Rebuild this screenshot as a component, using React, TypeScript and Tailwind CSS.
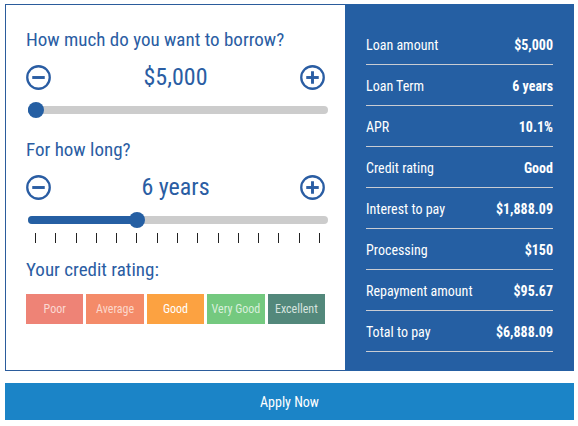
const BLUE = 'text-[#2a5da3]';

function MinusIcon() {
  return (
    <svg width="25" height="25" viewBox="0 0 24 24" fill="none">
      <circle cx="12" cy="12" r="10.8" stroke="#2a5da3" strokeWidth="2.2" />
      <rect x="6" y="10.6" width="12" height="2.8" fill="#2a5da3" />
    </svg>
  );
}

function PlusIcon() {
  return (
    <svg width="25" height="25" viewBox="0 0 24 24" fill="none">
      <circle cx="12" cy="12" r="10.8" stroke="#2a5da3" strokeWidth="2.2" />
      <rect x="6" y="10.6" width="12" height="2.8" fill="#2a5da3" />
      <rect x="10.6" y="6" width="2.8" height="12" fill="#2a5da3" />
    </svg>
  );
}

type SliderProps = { percent: number };

function Slider({ percent }: SliderProps) {
  return (
    <div className="relative h-4">
      <div className="absolute left-0 right-0 top-1 h-2 rounded-full bg-[#cccccc]" />
      <div
        className="absolute left-0 top-1 h-2 rounded-full bg-[#255fa3]"
        style={{ width: `calc(8px + (100% - 16px) * ${percent})` }}
      />
      <div
        className="absolute top-0 h-4 w-4 rounded-full bg-[#255fa3]"
        style={{ left: `calc((100% - 16px) * ${percent})` }}
      />
    </div>
  );
}

function Stepper({ value }: { value: string }) {
  return (
    <div className="flex h-[28px] items-center justify-between pr-[3px]">
      <MinusIcon />
      <span className={`text-[24px] leading-[28px] ${BLUE}`}>{value}</span>
      <PlusIcon />
    </div>
  );
}

const ratings = [
  { label: 'Poor', cls: 'bg-[#ee8376] text-[#fbd9d3]' },
  { label: 'Average', cls: 'bg-[#f48b69] text-[#fcd8cb]' },
  { label: 'Good', cls: 'bg-[#fca241] text-white' },
  { label: 'Very Good', cls: 'bg-[#74c97f] text-[#d9f0dc]' },
  { label: 'Excellent', cls: 'bg-[#53887b] text-[#d6e3df]' },
];

const summary = [
  ['Loan amount', '$5,000'],
  ['Loan Term', '6 years'],
  ['APR', '10.1%'],
  ['Credit rating', 'Good'],
  ['Interest to pay', '$1,888.09'],
  ['Processing', '$150'],
  ['Repayment amount', '$95.67'],
  ['Total to pay', '$6,888.09'],
];

export default function App() {
  return (
    <div
      className="pl-[5px] pt-[4px] w-[574px] font-stretch-condensed"
      style={{ fontFamily: '"Roboto Condensed", "Liberation Sans Narrow", Roboto, sans-serif' }}
    >
      <div className="flex h-[367px]">
        <div className="w-[340px] border-y border-l border-[#2b5c9c] pl-[20px] pr-[17px] pt-[23px]">
          <h2 className={`text-[19px] leading-[24px] ${BLUE}`}>How much do you want to borrow?</h2>
          <div className="mt-[11px]">
            <Stepper value="$5,000" />
          </div>
          <div className="mt-[11px] pl-[2px]">
            <Slider percent={0} />
          </div>
          <h2 className={`mt-[20px] text-[19px] leading-[24px] ${BLUE}`}>For how long?</h2>
          <div className="mt-[11px]">
            <Stepper value="6 years" />
          </div>
          <div className="mt-[11px] pl-[2px]">
            <Slider percent={5 / 14} />
          </div>
          <div className="mt-[5px] flex justify-between pl-[9px] pr-[8px]">
            {Array.from({ length: 15 }).map((_, i) => (
              <div key={i} className="h-[10px] w-px bg-[#222]" />
            ))}
          </div>
          <h2 className={`mt-[15px] text-[19px] leading-[24px] ${BLUE}`}>Your credit rating:</h2>
          <div className="mt-[12px] mr-[3px] flex gap-[3px]">
            {ratings.map((r) => (
              <div
                key={r.label}
                className={`flex h-[30px] flex-1 items-center justify-center text-[12px] ${r.cls}`}
              >
                {r.label}
              </div>
            ))}
          </div>
        </div>
        <div className="flex-1 bg-[#255fa3] px-[21px] pt-[20px]">
          {summary.map(([label, value]) => (
            <div
              key={label}
              className="flex h-[41px] items-center justify-between border-b border-[#c9ccd3] pt-[3px] text-[14px] text-white"
            >
              <span>{label}</span>
              <span className="font-bold">{value}</span>
            </div>
          ))}
        </div>
      </div>
      <button
        type="button"
        className="mt-[12px] flex h-[37px] w-[569px] items-center justify-center bg-[#1b84c7] pt-[2px] text-[14px] text-white"
      >
        Apply Now
      </button>
    </div>
  );
}
